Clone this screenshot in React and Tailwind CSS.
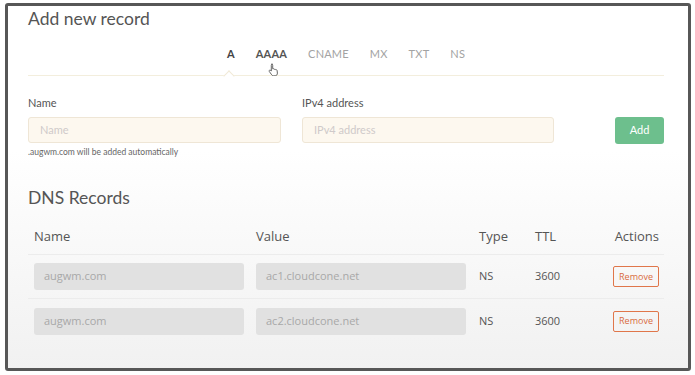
export default function App() {
  const tabs = [
    { t: "A", cls: "text-[#444] font-bold" },
    { t: "AAAA", cls: "text-[#555] font-bold" },
    { t: "CNAME", cls: "text-[#a3a3a3]" },
    { t: "MX", cls: "text-[#a3a3a3]" },
    { t: "TXT", cls: "text-[#a3a3a3]" },
    { t: "NS", cls: "text-[#a3a3a3]" },
  ];
  const rows = [
    { name: "augwm.com", value: "ac1.cloudcone.net" },
    { name: "augwm.com", value: "ac2.cloudcone.net" },
  ];
  const font = { fontFamily: "Lato, 'Open Sans', sans-serif" };
  return (
    <div className="w-[695px] h-[375px] bg-white pt-[3px] pl-[5px] overflow-hidden" style={font}>
      <div className="w-[686px] h-[368px] border-[3px] border-[#575757] rounded-[3px] bg-gradient-to-b from-white from-40% to-[#f1f1f1] pl-[20px] pr-[24px] pt-[1px]">
        <h1 className="text-[17.5px] leading-[24px] text-[#555] font-normal">Add new record</h1>
        <div className="relative mt-[12px] h-[33px] border-b border-[#f3eedd]">
          <div className="flex justify-center gap-[21px] pt-[3px] text-[11px] leading-[16px] tracking-[0.2px]">
            {tabs.map((x) => (
              <span key={x.t} className={x.cls}>{x.t}</span>
            ))}
          </div>
          <div className="absolute left-[197px] bottom-[-5px] w-[8px] h-[8px] rotate-45 bg-white border-l border-t border-[#f0e9d6]" />
          <svg className="absolute left-[240px] top-[20px]" width="12" height="13" viewBox="0 0 12 13">
            <path d="M3.5 1.2c.8 0 1.2.5 1.2 1.2v3.4l.4-.1c.6-.1 1.1.2 1.2.6.5-.3 1.2-.1 1.4.4.6-.2 1.3.1 1.4.8l.3 2.6c.1 1.4-.8 2.6-2.2 2.7H5.6c-.8 0-1.500-.4-1.9-1L1.3 8.5c-.4-.5-.2-1.1.3-1.3.4-.2.9 0 1.2.3l.5.6V2.4c0-.7.4-1.2 1.2-1.2z" fill="#fff" stroke="#555" strokeWidth="0.9" />
          </svg>
        </div>
        <div className="flex mt-[20px]">
          <div className="w-[253px]">
            <div className="text-[11px] leading-[14px] text-[#555]">Name</div>
            <div className="mt-[7px] h-[26px] rounded-[3px] border border-[#efe6d6] bg-[#fdf8ef] px-[11px] flex items-center text-[11px] text-[#cfcaca]">Name</div>
            <div className="mt-[3px] text-[8.5px] leading-[12px] text-[#666]">.augwm.com will be added automatically</div>
          </div>
          <div className="w-[252px] ml-[21px]">
            <div className="text-[11px] leading-[14px] text-[#555]">IPv4 address</div>
            <div className="mt-[7px] h-[26px] rounded-[3px] border border-[#efe6d6] bg-[#fdf8ef] px-[11px] flex items-center text-[11px] text-[#cfcaca]">IPv4 address</div>
          </div>
          <div className="flex-1 flex justify-end pt-[21px]">
            <div className="w-[49px] h-[27px] rounded-[3px] bg-[#6dbf8d] text-white text-[11px] flex items-center justify-center">Add</div>
          </div>
        </div>
        <h2 className="mt-[28px] text-[17.5px] leading-[24px] text-[#555] font-normal">DNS Records</h2>
        <div className="mt-[11px] text-[#555]" style={{ fontFamily: "'Open Sans', sans-serif" }}>
          <div className="grid grid-cols-[222px_222px_56px_70px_1fr] h-[34px] items-center border-b border-[#ececec] text-[13px] pb-[2px]">
            <div className="pl-[6px]">Name</div>
            <div className="pl-[6px]">Value</div>
            <div className="pl-[7px]">Type</div>
            <div className="pl-[7px]">TTL</div>
            <div className="text-right pr-[5px]">Actions</div>
          </div>
          {rows.map((r, i) => (
            <div key={i} className={"grid grid-cols-[222px_222px_56px_70px_1fr] h-[44px] items-center text-[11px] " + (i === 0 ? "border-b border-[#ececec]" : "")}>
              <div className="pl-[6px]">
                <div className="h-[27px] w-[210px] rounded-[3px] bg-[#e1e1e1] px-[10px] flex items-center text-[#a8a8a8]">{r.name}</div>
              </div>
              <div className="pl-[6px]">
                <div className="h-[27px] w-[210px] rounded-[3px] bg-[#e1e1e1] px-[10px] flex items-center text-[#a8a8a8]">{r.value}</div>
              </div>
              <div className="pl-[7px] text-[#555]">NS</div>
              <div className="pl-[7px] text-[#555]">3600</div>
              <div className="flex justify-end pr-[5px]">
                <div className="w-[46px] h-[21px] rounded-[2px] border border-[#e0764a] text-[#d96a3e] text-[9px] flex items-center justify-center">Remove</div>
              </div>
            </div>
          ))}
        </div>
      </div>
    </div>
  );
}
